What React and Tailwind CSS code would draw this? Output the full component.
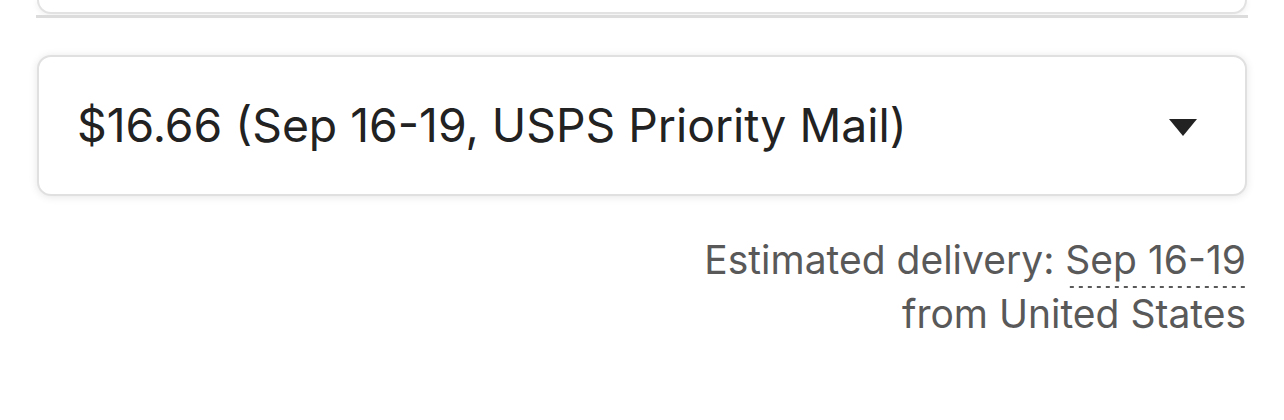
export default function App() {
  return (
    <div className="w-[1284px] h-[420px] overflow-hidden bg-white font-['Inter',sans-serif]">
      <div className="px-[36px]">
        <div className="mx-[1px] h-[14px] rounded-b-[14px] border-x-2 border-b-2 border-[#e2e2e2] bg-white shadow-[0_1px_6px_rgba(0,0,0,0.08)]"></div>
        <div className="mt-[1px] h-[3px] bg-[#dcdcdc]"></div>
      </div>
      <div className="px-[37px] pt-[37px]">
        <div className="flex h-[141px] items-center justify-between rounded-[14px] border-2 border-[#e0e0e0] bg-white pl-[38px] pr-[48px] shadow-[0_1px_8px_rgba(0,0,0,0.10)]">
          <span className="text-[46.3px] leading-none text-[#222222]">$16.66 (Sep 16-19, USPS Priority Mail)</span>
          <svg width="28" height="17" viewBox="0 0 28 17" className="mt-[4px]">
            <polygon points="0,0 28,0 14,17" fill="#222222" />
          </svg>
        </div>
      </div>
      <div className="mt-[37px] pr-[38px] text-right text-[39px] leading-[54px] text-[#595959]">
        <div>
          Estimated delivery:{" "}
          <span className="bg-[linear-gradient(to_right,#595959_50%,transparent_50%)] bg-[length:9px_2px] bg-bottom bg-repeat-x pb-[5px]">
            Sep 16-19
          </span>
        </div>
        <div>from United States</div>
      </div>
    </div>
  );
}
